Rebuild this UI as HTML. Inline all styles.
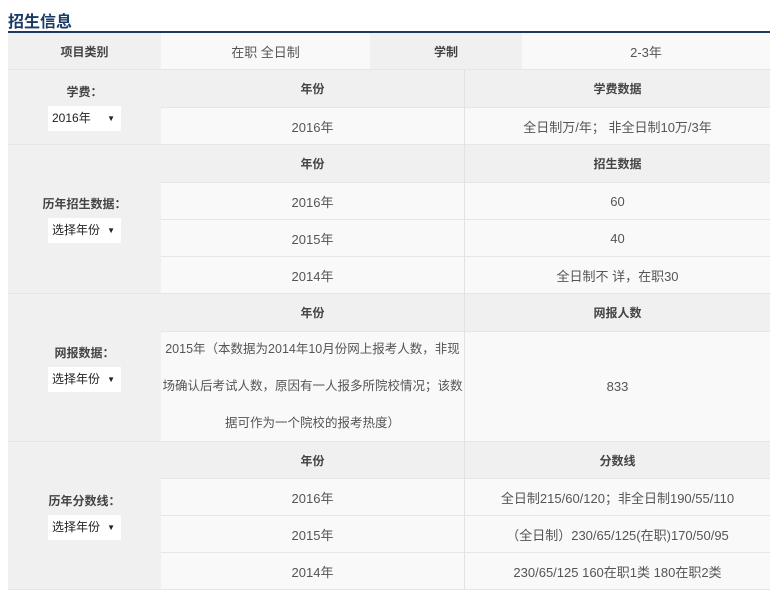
<!DOCTYPE html>
<html><head><meta charset="utf-8"><style>
body{margin:0;width:772px;height:600px;background:#fff;font-family:"Liberation Sans","Noto Sans CJK SC",sans-serif;font-size:13px;color:#555;position:relative;overflow:hidden}
.t{position:absolute;left:8px;top:8px;font-size:16px;font-weight:bold;color:#1a3a66}
.ln{position:absolute;left:8px;top:31px;width:762px;height:2px;background:#1e3a5f}
.c{position:absolute;display:flex;align-items:center;justify-content:center;text-align:center;box-sizing:border-box;border-bottom:1px solid #e6e6e6}
.g{background:#f0f0f0}.w{background:#f9f9f9}.h{font-weight:bold;color:#444;font-size:12px}
.vr{border-right:1px solid #e2e2e2}
.sel{display:inline-block;background:#fff;width:73px;height:25px;line-height:25px;text-align:left;padding-left:4px;box-sizing:border-box;color:#222;position:relative;margin-top:6px;font-size:12px}
.sel:after{content:"▼";position:absolute;right:6px;font-size:8px}
.lab{flex-direction:column}
</style></head><body>
<div class="t">招生信息</div><div class="ln"></div>
<div class="c g h" style="left:8px;top:33px;width:153px;height:37px">项目类别</div>
<div class="c w" style="left:161px;top:33px;width:209px;height:37px">在职 全日制</div>
<div class="c g h" style="left:370px;top:33px;width:152px;height:37px">学制</div>
<div class="c w" style="left:522px;top:33px;width:248px;height:37px">2-3年</div>

<div class="c g lab" style="left:8px;top:70px;width:153px;height:75px"><span class="h">学费：</span><span class="sel">2016年</span></div>
<div class="c g h vr" style="left:161px;top:70px;width:304px;height:38px">年份</div>
<div class="c g h" style="left:465px;top:70px;width:305px;height:38px">学费数据</div>
<div class="c w vr" style="left:161px;top:108px;width:304px;height:37px">2016年</div>
<div class="c w" style="left:465px;top:108px;width:305px;height:37px">全日制万/年； 非全日制10万/3年</div>

<div class="c g lab" style="left:8px;top:145px;width:153px;height:149px"><span class="h">历年招生数据：</span><span class="sel">选择年份</span></div>
<div class="c g h vr" style="left:161px;top:145px;width:304px;height:38px">年份</div>
<div class="c g h" style="left:465px;top:145px;width:305px;height:38px">招生数据</div>
<div class="c w vr" style="left:161px;top:183px;width:304px;height:37px">2016年</div>
<div class="c w" style="left:465px;top:183px;width:305px;height:37px">60</div>
<div class="c w vr" style="left:161px;top:220px;width:304px;height:37px">2015年</div>
<div class="c w" style="left:465px;top:220px;width:305px;height:37px">40</div>
<div class="c w vr" style="left:161px;top:257px;width:304px;height:37px">2014年</div>
<div class="c w" style="left:465px;top:257px;width:305px;height:37px">全日制不 详，在职30</div>

<div class="c g lab" style="left:8px;top:294px;width:153px;height:148px"><span class="h">网报数据：</span><span class="sel">选择年份</span></div>
<div class="c g h vr" style="left:161px;top:294px;width:304px;height:38px">年份</div>
<div class="c g h" style="left:465px;top:294px;width:305px;height:38px">网报人数</div>
<div class="c w vr" style="left:161px;top:332px;width:304px;height:110px;line-height:37px;padding:0 1px;font-size:12.5px">2015年（本数据为2014年10月份网上报考人数，非现场确认后考试人数，原因有一人报多所院校情况；该数据可作为一个院校的报考热度）</div>
<div class="c w" style="left:465px;top:332px;width:305px;height:110px">833</div>

<div class="c g lab" style="left:8px;top:442px;width:153px;height:148px"><span class="h">历年分数线：</span><span class="sel">选择年份</span></div>
<div class="c g h vr" style="left:161px;top:442px;width:304px;height:37px">年份</div>
<div class="c g h" style="left:465px;top:442px;width:305px;height:37px">分数线</div>
<div class="c w vr" style="left:161px;top:479px;width:304px;height:37px">2016年</div>
<div class="c w" style="left:465px;top:479px;width:305px;height:37px">全日制215/60/120；非全日制190/55/110</div>
<div class="c w vr" style="left:161px;top:516px;width:304px;height:37px">2015年</div>
<div class="c w" style="left:465px;top:516px;width:305px;height:37px">（全日制）230/65/125(在职)170/50/95</div>
<div class="c w vr" style="left:161px;top:553px;width:304px;height:37px">2014年</div>
<div class="c w" style="left:465px;top:553px;width:305px;height:37px">230/65/125 160在职1类 180在职2类</div>
</body></html>
